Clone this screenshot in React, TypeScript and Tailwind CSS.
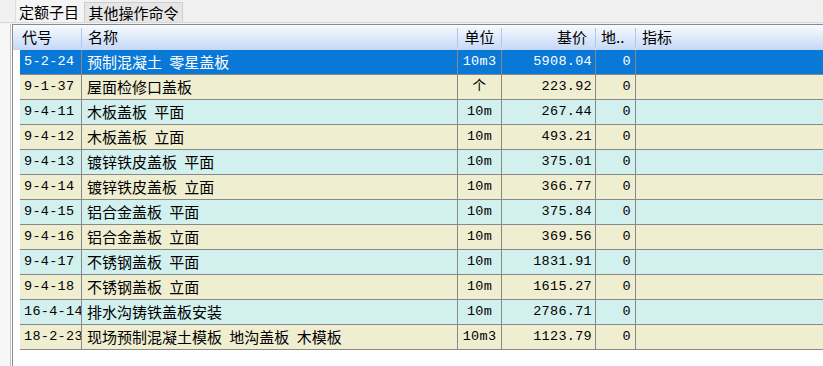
import React from 'react';

type Row = { code: string; name: string; unit: string; price: string; di: string };

const rows: Row[] = [
  { code: '5-2-24', name: '预制混凝土 零星盖板', unit: '10m3', price: '5908.04', di: '0' },
  { code: '9-1-37', name: '屋面检修口盖板', unit: '个', price: '223.92', di: '0' },
  { code: '9-4-11', name: '木板盖板 平面', unit: '10m', price: '267.44', di: '0' },
  { code: '9-4-12', name: '木板盖板 立面', unit: '10m', price: '493.21', di: '0' },
  { code: '9-4-13', name: '镀锌铁皮盖板 平面', unit: '10m', price: '375.01', di: '0' },
  { code: '9-4-14', name: '镀锌铁皮盖板 立面', unit: '10m', price: '366.77', di: '0' },
  { code: '9-4-15', name: '铝合金盖板 平面', unit: '10m', price: '375.84', di: '0' },
  { code: '9-4-16', name: '铝合金盖板 立面', unit: '10m', price: '369.56', di: '0' },
  { code: '9-4-17', name: '不锈钢盖板 平面', unit: '10m', price: '1831.91', di: '0' },
  { code: '9-4-18', name: '不锈钢盖板 立面', unit: '10m', price: '1615.27', di: '0' },
  { code: '16-4-14', name: '排水沟铸铁盖板安装', unit: '10m', price: '2786.71', di: '0' },
  { code: '18-2-23', name: '现场预制混凝土模板 地沟盖板 木模板', unit: '10m3', price: '1123.79', di: '0' },
];

const cjk = "font-['Noto_Sans_CJK_SC',sans-serif] text-[15px]";
const mono = "font-['Liberation_Mono','Noto_Sans_CJK_SC',monospace] text-[13.5px] tracking-[0.3px]";

function HeadSep() {
  return <div className="w-px h-[19px] bg-[#a9c9ee] shrink-0" />;
}

export default function App() {
  return (
    <div className={`w-[823px] h-[366px] bg-[#f0f0f0] overflow-hidden flex flex-col text-black ${cjk}`}>
      {/* Tabs */}
      <div className="h-[23px] flex items-end pl-[15px] border-b border-[#dadada] shrink-0">
        <div className="h-[22px] w-[69px] border-l border-[#dcdcdc] bg-[#f4f4f4] flex items-center pl-[3px] leading-none">
          定额子目
        </div>
        <div className="h-[20px] w-[99px] bg-[#e6e6e6] border border-b-0 border-[#cdcdcd] flex items-center justify-center leading-none">
          其他操作命令
        </div>
      </div>

      {/* Grid area */}
      <div className="flex flex-1 mt-px">
        <div className="w-[11px] bg-[#f7f7f7] border-r border-[#c4c4c4]" />
        <div className="w-px bg-white" />
        <div className="flex-1 flex flex-col bg-white border-l border-t border-[#8a8a8a]">
          {/* Header */}
          <div className="h-[25px] flex items-center bg-linear-to-b from-[#f8fbff] to-[#c4d8f5] shrink-0">
            <div className="w-[69px] h-full flex items-center justify-between pl-[9px]">
              <span>代号</span>
              <HeadSep />
            </div>
            <div className="w-[376px] h-full flex items-center justify-between pl-[6px]">
              <span>名称</span>
              <HeadSep />
            </div>
            <div className="w-[44px] h-full flex items-center">
              <span className="flex-1 text-center">单位</span>
              <HeadSep />
            </div>
            <div className="w-[94px] h-full flex items-center">
              <span className="flex-1 text-right pr-[8px]">基价</span>
              <HeadSep />
            </div>
            <div className="w-[40px] h-full flex items-center">
              <span className="flex-1 pl-[5px] whitespace-nowrap">地..</span>
              <HeadSep />
            </div>
            <div className="flex-1 h-full flex items-center pl-[6px]">指标</div>
          </div>

          {/* Rows */}
          {rows.map((r, i) => {
            const bg = i === 0 ? 'bg-[#0a78d7] text-white' : i % 2 === 1 ? 'bg-[#f0eed0]' : 'bg-[#d1f0ee]';
            return (
              <div key={r.code} className="h-[25px] flex shrink-0">
                <div className="w-[7px] bg-white" />
                <div className={`flex-1 flex border-b border-[#888888] ${bg}`}>
                  <div className={`w-[62px] border-r border-[#888888] flex items-center pl-[4px] overflow-hidden whitespace-nowrap ${mono}`}>
                    {r.code}
                  </div>
                  <div className="w-[376px] border-r border-[#888888] flex items-center pl-[5px] overflow-hidden whitespace-nowrap [word-spacing:4px]">
                    {r.name}
                  </div>
                  <div className={`w-[44px] border-r border-[#888888] flex items-center justify-center ${mono}`}>
                    {r.unit}
                  </div>
                  <div className={`w-[94px] border-r border-[#888888] flex items-center justify-end pr-[3px] ${mono}`}>
                    {r.price}
                  </div>
                  <div className={`w-[40px] border-r border-[#888888] flex items-center justify-end pr-[4px] ${mono}`}>
                    {r.di}
                  </div>
                  <div className="flex-1" />
                </div>
              </div>
            );
          })}
        </div>
      </div>
    </div>
  );
}
